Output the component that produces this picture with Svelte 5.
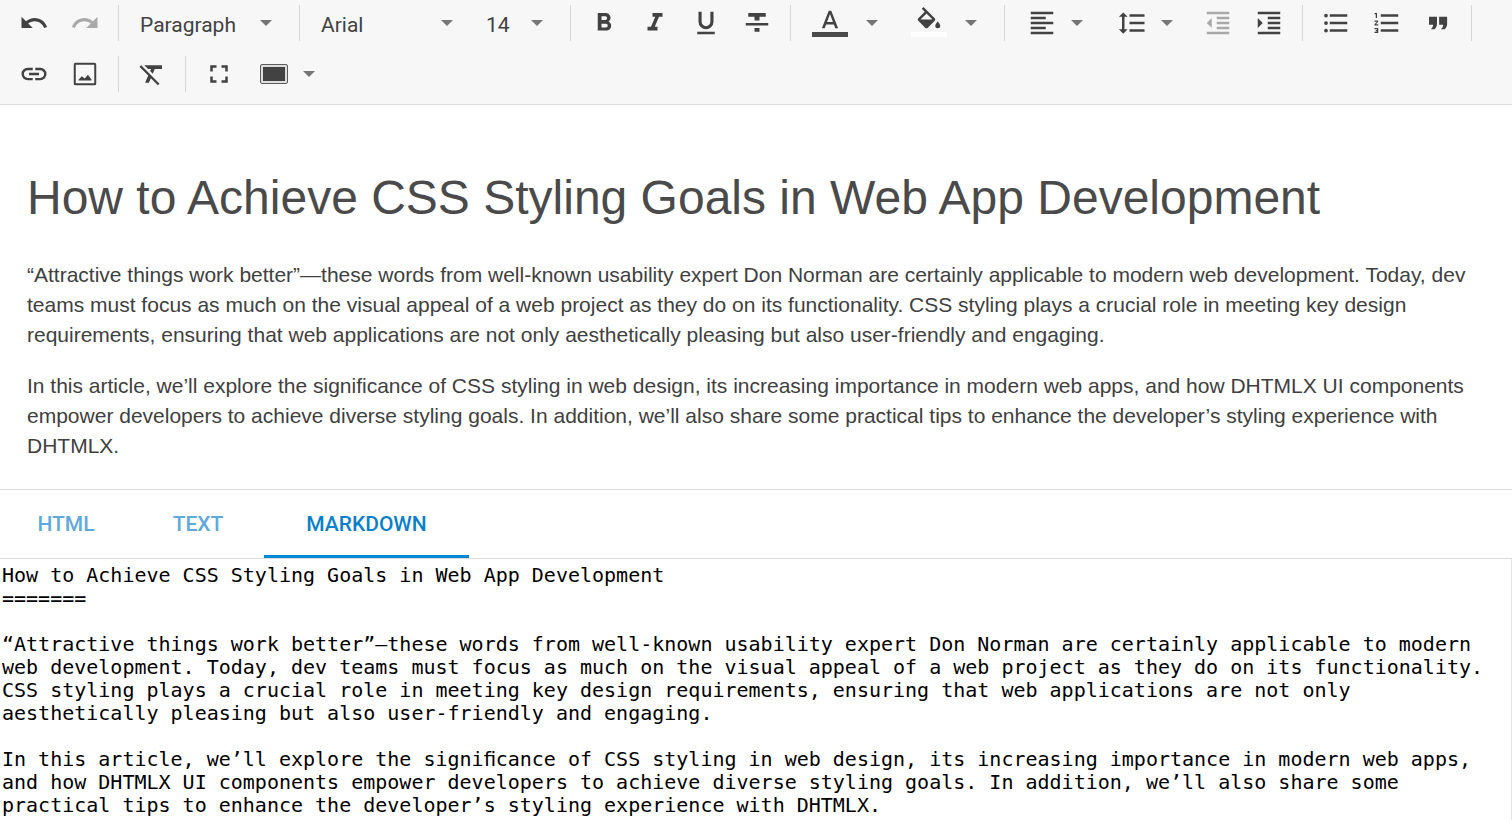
<script>
  const icons = {
    undo: 'M12.5,8C9.85,8 7.45,9 5.6,10.6L2,7V16H11L7.38,12.38C8.77,11.22 10.54,10.5 12.5,10.5C16.04,10.5 19.05,12.81 20.1,16L22.47,15.22C21.08,11.03 17.15,8 12.5,8Z',
    redo: 'M18.4,10.6C16.55,9 14.15,8 11.5,8C6.85,8 2.92,11.03 1.54,15.22L3.9,16C4.95,12.81 7.95,10.5 11.5,10.5C13.45,10.5 15.23,11.22 16.62,12.38L13,16H22V7L18.4,10.6Z',
    bold: 'M13.5,15.5H10V12.5H13.5A1.5,1.5 0 0,1 15,14A1.5,1.5 0 0,1 13.5,15.5M10,6.5H13A1.5,1.5 0 0,1 14.5,8A1.5,1.5 0 0,1 13,9.5H10M15.6,10.79C16.57,10.11 17.25,9 17.25,8C17.25,5.74 15.5,4 13.25,4H7V18H14.04C16.14,18 17.75,16.3 17.75,14.21C17.75,12.69 16.89,11.39 15.6,10.79Z',
    italic: 'M10,4V7H12.21L8.79,15H6V18H14V15H11.79L15.21,7H18V4H10Z',
    underline: 'M5,21H19V19H5V21M12,17A6,6 0 0,0 18,11V3H15.5V11A3.5,3.5 0 0,1 12,14.5A3.5,3.5 0 0,1 8.5,11V3H6V11A6,6 0 0,0 12,17Z',
    strike: 'M3,14H21V12H3M5,4V7H10V10H14V7H19V4M10,19H14V16H10V19Z',
    textColor: 'M9.62,12L12,5.67L14.37,12M11,3L5.5,17H7.75L8.87,14H15.12L16.25,17H18.5L13,3H11Z',
    fillColor: 'M19,11.5C19,11.5 17,13.67 17,15A2,2 0 0,0 19,17A2,2 0 0,0 21,15C21,13.67 19,11.5 19,11.5M5.21,10L10,5.21L14.79,10M16.56,8.94L7.62,0L6.21,1.41L8.59,3.79L3.44,8.94C2.85,9.5 2.85,10.47 3.44,11.06L8.94,16.56C9.23,16.85 9.62,17 10,17C10.38,17 10.77,16.85 11.06,16.56L16.56,11.06C17.15,10.47 17.15,9.5 16.56,8.94Z',
    align: 'M3,3H21V5H3V3M3,7H15V9H3V7M3,11H21V13H3V11M3,15H15V17H3V15M3,19H21V21H3V19Z',
    lineHeight: 'M10,13H22V11H10M10,19H22V17H10M10,7H22V5H10M6,7H8.5L5,3.5L1.5,7H4V17H1.5L5,20.5L8.5,17H6V7Z',
    outdent: 'M11,13H21V11H11M11,9H21V7H11M3,3V5H21V3M3,21H21V19H3M3,12L7,16V8M11,17H21V15H11V17Z',
    indent: 'M11,13H21V11H11M11,9H21V7H11M3,3V5H21V3M11,17H21V15H11M3,8V16L7,12M3,21H21V19H3V21Z',
    bullets: 'M7,5H21V7H7V5M7,13V11H21V13H7M4,4.5A1.5,1.5 0 0,1 5.5,6A1.5,1.5 0 0,1 4,7.5A1.5,1.5 0 0,1 2.5,6A1.5,1.5 0 0,1 4,4.5M4,10.5A1.5,1.5 0 0,1 5.5,12A1.5,1.5 0 0,1 4,13.5A1.5,1.5 0 0,1 2.5,12A1.5,1.5 0 0,1 4,10.5M7,19V17H21V19H7M4,16.5A1.5,1.5 0 0,1 5.5,18A1.5,1.5 0 0,1 4,19.5A1.5,1.5 0 0,1 2.5,18A1.5,1.5 0 0,1 4,16.5Z',
    numbers: 'M7,13V11H21V13H7M7,19V17H21V19H7M7,7V5H21V7H7M3,8V5H2V4H4V8H3M2,17V16H5V20H2V19H4V18.5H3V17.5H4V17H2M4.25,10A0.75,0.75 0 0,1 5,10.75C5,10.95 4.92,11.14 4.79,11.27L3.12,13H5V14H2V13.08L4,11H2V10H4.25Z',
    quote: 'M4.8,7H11.2V12.6C11.2,14.6 10.4,16 9.2,17H6.2C7.4,16 8.1,14.8 8.1,13.4H4.8ZM12.9,7H19.3V12.6C19.3,14.6 18.5,16 17.3,17H14.3C15.5,16 16.2,14.8 16.2,13.4H12.9Z',
    link: 'M3.9,12C3.9,10.29 5.29,8.9 7,8.9H11V7H7A5,5 0 0,0 2,12A5,5 0 0,0 7,17H11V15.1H7C5.29,15.1 3.9,13.71 3.9,12M8,13H16V11H8V13M17,7H13V8.9H17C18.71,8.9 20.1,10.29 20.1,12C20.1,13.71 18.71,15.1 17,15.1H13V17H17A5,5 0 0,0 22,12A5,5 0 0,0 17,7Z',
    image: 'M19.4,19.4H4.6V4.6H19.4V19.4M19.5,3H4.5A1.5,1.5 0 0,0 3,4.5V19.5A1.5,1.5 0 0,0 4.5,21H19.5A1.5,1.5 0 0,0 21,19.5V4.5A1.5,1.5 0 0,0 19.5,3M6.8,17.2H17.2V16.4L14.3,12.6L11.8,15.6L9.4,13.8L6.8,16.6Z',
    clear: 'M3.27,5L2,6.27L8.97,13.24L6.5,19H9.5L11.07,15.34L16.73,21L18,19.73L3.55,5.27L3.27,5M6,5V5.18L8.82,8H11.22L10.5,9.68L12.6,11.78L14.21,8H20V5H6Z',
    fullscreen: 'M5,5H10V7H7V10H5V5M14,5H19V10H17V7H14V5M17,14H19V19H14V17H17V14M10,17V19H5V14H7V17H10Z'
  };

  const tabs = ['HTML', 'TEXT', 'MARKDOWN'];
  let active = $state('MARKDOWN');

  const title = 'How to Achieve CSS Styling Goals in Web App Development';
  const paragraphs = [
    '“Attractive things work better”—these words from well-known usability expert Don Norman are certainly applicable to modern web development. Today, dev teams must focus as much on the visual appeal of a web project as they do on its functionality. CSS styling plays a crucial role in meeting key design requirements, ensuring that web applications are not only aesthetically pleasing but also user-friendly and engaging.',
    'In this article, we’ll explore the significance of CSS styling in web design, its increasing importance in modern web apps, and how DHTMLX UI components empower developers to achieve diverse styling goals. In addition, we’ll also share some practical tips to enhance the developer’s styling experience with DHTMLX.'
  ];

  // The monospace pane sets "fi" as a single-cell ligature.
  const plain = paragraphs.map((p) => p.replaceAll('fi', 'ﬁ'));

  const source = $derived.by(() => {
    if (active === 'HTML') return [`<h1>${title}</h1>`, ...plain.map((p) => `<p>${p}</p>`)].join('\n');
    if (active === 'TEXT') return [title, ...plain].join('\n\n');
    return [`${title}\n=======`, ...plain].join('\n\n');
  });
</script>

{#snippet arrow()}
  <svg class="arrow" width="12" height="6" viewBox="0 0 12 6" aria-hidden="true"><path d="M0 0H12L6 6Z" /></svg>
{/snippet}

{#snippet glyph(name)}
  <svg width="30" height="30" viewBox="0 0 24 24" aria-hidden="true"><path d={icons[name]} /></svg>
{/snippet}

{#snippet tool(name, label, disabled = false)}
  <button class="tool" type="button" aria-label={label} {disabled}>{@render glyph(name)}</button>
{/snippet}

{#snippet menu(name, label)}
  <button class="menu" type="button" aria-label={label}>{@render glyph(name)}{@render arrow()}</button>
{/snippet}

{#snippet color(name, label, swatch)}
  <button class="menu wide" type="button" aria-label={label}>
    <svg width="36" height="36" viewBox="0 0 36 36" aria-hidden="true">
      <path transform="translate(3 2) scale(1.25)" d={icons[name]} />
      <rect y="27" width="36" height="5" style:fill={swatch} />
    </svg>
    {@render arrow()}
  </button>
{/snippet}

{#snippet combo(label, options, narrow = false)}
  <label class="combo" class:narrow>
    <select aria-label={label}>
      {#each options as option}<option>{option}</option>{/each}
    </select>
    {@render arrow()}
  </label>
{/snippet}

<main>
  <div class="toolbar" role="toolbar" aria-label="Formatting">
    <div class="group">
      {@render tool('undo', 'Undo')}
      {@render tool('redo', 'Redo', true)}
    </div>
    <div class="group">{@render combo('Text style', ['Paragraph'])}</div>
    <div class="group">
      {@render combo('Font', ['Arial'])}
      {@render combo('Font size', ['14'], true)}
    </div>
    <div class="group">
      {@render tool('bold', 'Bold')}
      {@render tool('italic', 'Italic')}
      {@render tool('underline', 'Underline')}
      {@render tool('strike', 'Strikethrough')}
    </div>
    <div class="group">
      {@render color('textColor', 'Text color', '#4a4a4a')}
      {@render color('fillColor', 'Background color', '#ffffff')}
    </div>
    <div class="group">
      {@render menu('align', 'Align')}
      {@render menu('lineHeight', 'Line height')}
      {@render tool('outdent', 'Decrease indent', true)}
      {@render tool('indent', 'Increase indent')}
    </div>
    <div class="group">
      {@render tool('bullets', 'Bulleted list')}
      {@render tool('numbers', 'Numbered list')}
      {@render tool('quote', 'Quote')}
    </div>
    <div class="group">
      {@render tool('link', 'Insert link')}
      {@render tool('image', 'Insert image')}
    </div>
    <div class="group">{@render tool('clear', 'Clear format')}</div>
    <div class="group">
      {@render tool('fullscreen', 'Full screen')}
      <button class="menu" type="button" aria-label="Theme">
        <svg width="30" height="30" viewBox="0 0 30 30" aria-hidden="true">
          <rect x="1.5" y="5.5" width="27" height="19" rx="1.5" style:fill="#dddddd" stroke="#5c5c5c" />
          <rect x="4" y="8" width="22" height="14" />
        </svg>
        {@render arrow()}
      </button>
    </div>
  </div>

  <article>
    <h1>{title}</h1>
    {#each paragraphs as text}<p>{text}</p>{/each}
  </article>

  <div class="tabs" role="tablist">
    {#each tabs as tab}
      <button type="button" role="tab" aria-selected={active === tab} onclick={() => (active = tab)}>{tab}</button>
    {/each}
  </div>
  <textarea readonly aria-label="Source" spellcheck="false" value={source}></textarea>
</main>

<style>
  :global(body) {
    margin: 0;
    background: #fff;
  }

  main {
    display: flex;
    flex-direction: column;
    min-height: 100vh;
    box-sizing: border-box;
  }

  button,
  select,
  textarea {
    margin: 0;
    padding: 0;
    border: 0;
    background: none;
    font: inherit;
    color: inherit;
  }

  svg {
    display: block;
    flex: none;
    fill: #424242;
  }

  .toolbar {
    display: flex;
    flex-wrap: wrap;
    row-gap: 15px;
    padding: 5px 0 12px 8px;
    background: #f7f7f7;
    border-bottom: 1px solid #dcdcdc;
    font: 21px/36px Roboto, sans-serif;
    color: #424242;
  }

  .group {
    display: flex;
    height: 36px;
    padding-right: 8px;
    margin-right: 7px;
    border-right: 1px solid #d6d6d6;
  }

  .group:last-child {
    border-right: 0;
  }

  .tool,
  .menu {
    display: flex;
    align-items: center;
  }

  .tool {
    width: 51px;
    justify-content: center;
  }

  .tool:disabled svg {
    fill: #a9a9a9;
  }

  .menu {
    width: 90px;
    padding: 0 19px 0 15px;
    justify-content: space-between;
  }

  .menu.wide {
    width: 99px;
    padding-left: 14px;
  }

  .arrow {
    fill: #757575;
  }

  .combo {
    display: grid;
    width: 165px;
    align-items: center;
  }

  .combo.narrow {
    width: 90px;
  }

  .combo select,
  .combo .arrow {
    grid-area: 1 / 1;
  }

  .combo select {
    appearance: none;
    height: 36px;
    padding: 2px 40px 0 14px;
  }

  .combo .arrow {
    justify-self: end;
    margin-right: 19px;
    pointer-events: none;
  }

  article {
    padding: 63px 28px 28px 27px;
    border-bottom: 1px solid #dcdcdc;
    font: 21px/30px 'Liberation Sans', Arial, sans-serif;
    color: #404040;
  }

  h1 {
    margin: 0;
    font-size: 48px;
    line-height: 60px;
    font-weight: 400;
    color: #4a4a4a;
  }

  p {
    margin: 21px 0 0;
  }

  h1 + p {
    margin-top: 32px;
  }

  .tabs {
    display: flex;
    height: 68px;
    border-bottom: 1px solid #dcdcdc;
    font: 500 21px/30px Roboto, sans-serif;
  }

  .tabs button {
    min-width: 132px;
    padding: 2px 36px 0;
    border-bottom: 3px solid transparent;
    color: #5fa9dc;
  }

  .tabs button[aria-selected='true'] {
    min-width: 205px;
    border-bottom-color: #0288d1;
    color: #0a7fcb;
  }

  textarea {
    flex: 1;
    padding: 5px 2px 0;
    border-right: 1px solid #e4e4e4;
    outline: 0;
    resize: none;
    field-sizing: content;
    font: 20px/23px 'DejaVu Sans Mono', monospace;
    color: #000;
  }
</style>
